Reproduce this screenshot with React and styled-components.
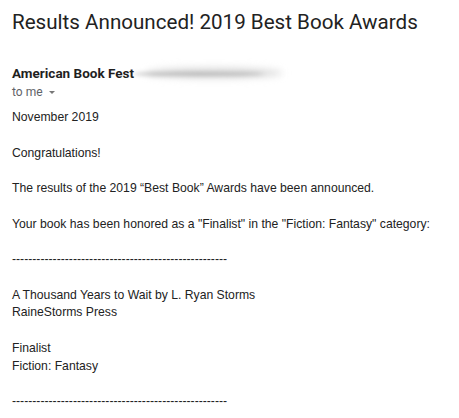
import React from 'react';
import styled, {createGlobalStyle} from 'styled-components';

const GlobalStyle = createGlobalStyle`
  body {
    margin: 0;
    background: #fff;
  }
`;

const App = () => {
    const dashes = '-'.repeat(53);

    return (
        <Page>
            <GlobalStyle/>
            <Subject>Results Announced! 2019 Best Book Awards</Subject>
            <Sender>
                <Name>American Book Fest</Name>
                <Smudge/>
            </Sender>
            <Recipient>
                to me
                <Caret/>
            </Recipient>
            <Body>
                <Dateline>November 2019</Dateline>
                <Para>Congratulations!</Para>
                <Para>The results of the 2019 “Best Book” Awards have been announced.</Para>
                <Para>Your book has been honored as a "Finalist" in the "Fiction: Fantasy" category:</Para>
                <Para>{dashes}</Para>
                <Para>
                    <Line>A Thousand Years to Wait by L. Ryan Storms</Line>
                    <Line>RaineStorms Press</Line>
                </Para>
                <Para>
                    <Line>Finalist</Line>
                    <Line>Fiction: Fantasy</Line>
                </Para>
                <Para>{dashes}</Para>
            </Body>
        </Page>
    )
}

const Page = styled.div`
  padding: 8px 12px 0;
  font-family: Arial, "Liberation Sans", sans-serif;
  color: #222;
`;

const Subject = styled.h1`
  margin: 0;
  font-family: Roboto, "Liberation Sans", sans-serif;
  font-weight: 400;
  font-size: 20.6px;
  line-height: 28px;
  color: #222;
`;

const Sender = styled.div`
  display: flex;
  align-items: center;
  margin-top: 28px;
  height: 18px;
`;

const Name = styled.span`
  font-family: Roboto, "Liberation Sans", sans-serif;
  font-weight: 700;
  font-size: 13.5px;
  color: #1f1f1f;
`;

const Smudge = styled.span`
  display: block;
  width: 132px;
  height: 4px;
  margin-left: -1px;
  margin-top: 1px;
  border-radius: 50%;
  background: #b8b8b8;
  filter: blur(2px);
  box-shadow: 15px -1px 6px 3px #d9d9d9;
`;

const Recipient = styled.div`
  display: flex;
  align-items: center;
  margin-top: 2px;
  font-family: Roboto, "Liberation Sans", sans-serif;
  font-size: 12px;
  line-height: 16px;
  color: #5f6368;
`;

const Caret = styled.span`
  width: 0;
  height: 0;
  margin-left: 6px;
  margin-top: 1px;
  border-left: 3.5px solid transparent;
  border-right: 3.5px solid transparent;
  border-top: 3.5px solid #777;
`;

const Body = styled.div`
  margin-top: 9px;
  font-size: 12.2px;
  line-height: 17.75px;
  color: #222;
`;

const Line = styled.div`
  white-space: nowrap;
`;

const Dateline = styled(Line)`
  margin-bottom: 3px;
`;

const Para = styled.div`
  margin-top: 17.75px;
  white-space: nowrap;
`;

export default App;
